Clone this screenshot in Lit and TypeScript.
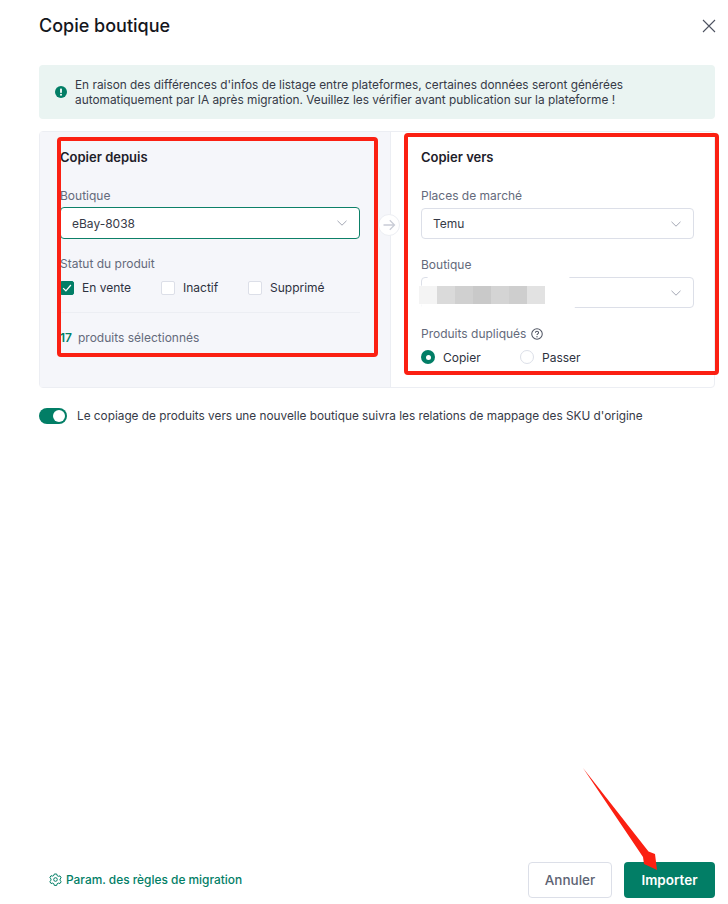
import { LitElement, html, css, svg } from "lit";
import { customElement } from "lit/decorators.js";

const chevron = html`<svg class="chev" width="12" height="12" viewBox="0 0 12 12" fill="none"><path d="M1.500 3.800 6 8.200l4.500-4.400" stroke="#a4a8b5" stroke-width="1"/></svg>`;

@customElement("app-root")
export class AppRoot extends LitElement {
  static styles = css`
    :host { display: block; position: relative; width: 728px; height: 904px; background: #fff; overflow: hidden;
      font-family: Inter, "Noto Sans", sans-serif; font-size: 12px; color: #2e3240; }
    * { box-sizing: border-box; }
    .modal { display: flex; flex-direction: column; height: 904px; padding: 0 13px 7px 39px; }
    .head { display: flex; justify-content: space-between; align-items: center; height: 51px; }
    h1 { margin: 0; font-size: 18px; font-weight: 500; color: #14161c; line-height: 24px; }
    .close { margin-right: -1px; display: block; }
    .alert { margin-top: 14px; height: 54px; border-radius: 4px; background: #eaf4f2; display: flex; align-items: center; gap: 8px; padding: 0 16px; line-height: 15px; font-size: 11.85px; color: #363a47; }
    .alert svg { flex: none; }
    .alert div { margin-top: 2px; }
    .panel { margin-top: 12px; height: 257px; border: 1px solid #eceef3; border-radius: 4px; display: flex; }
    .from { width: 351px; padding: 17px 30px 0 20px; background: #f5f6fa; border-right: 1px solid #eceef3; position: relative; }
    .to { flex: 1; padding: 17px 20px 0 30px; }
    h2 { margin: 0; font-size: 13px; font-weight: 600; line-height: 16px; color: #1d2029; }
    .label { color: #646a7b; line-height: 16px; padding-top: 1px; font-size: 12px; display: flex; align-items: center; gap: 5px; }
    .label.flat { padding-top: 0; }
    .mt22 { margin-top: 22px; }
    .select { margin-top: 4px; height: 31px; border: 1px solid #dcdfe8; border-radius: 4px; background: #fff; display: flex; align-items: center; justify-content: space-between; padding: 0 11px; color: #363a47; }
    .select.focus { margin-top: 3px; height: 32px; border-color: #0d8068; }
    .after { margin-top: 17px; }
    .arrow { position: absolute; right: -10px; top: 82px; width: 22px; height: 22px; border-radius: 50%; background: #fff; border: 1px solid #eceef3; display: flex; align-items: center; justify-content: center; }
    .checks { display: flex; margin-top: 8px; height: 16px; align-items: center; }
    .check { display: flex; align-items: center; gap: 8px; line-height: 16px; }
    .box { width: 14px; height: 14px; border: 1px solid #dcdfe8; border-radius: 2px; background: #fff; display: flex; align-items: center; justify-content: center; }
    .box.on { background: #027e66; border-color: #027e66; }
    .c1 { width: 101px; } .c2 { width: 87px; }
    .divider { height: 1px; background: #eceef3; margin-top: 16px; }
    .count { margin-top: 17px; line-height: 16px; color: #646a7b; display: flex; gap: 6px; font-size: 12px; }
    .count b { color: #027e66; font-weight: 600; }
    .radios { display: flex; margin-top: 7px; height: 16px; align-items: center; }
    .radio { display: flex; align-items: center; gap: 8px; }
    .r1 { width: 99px; }
    .dot { width: 14px; height: 14px; border-radius: 50%; border: 1px solid #dcdfe8; background: #fff; }
    .dot.on { background: #027e66; border: 0; display: flex; align-items: center; justify-content: center; }
    .dot.on::after { content: ""; width: 5px; height: 5px; border-radius: 50%; background: #fff; }
    .switch-row { margin-top: 20px; display: flex; align-items: center; gap: 10px; height: 16px; font-size: 11.800px; color: #363a47; }
    .switch { width: 28px; height: 16px; background: #027e66; border-radius: 8px; padding: 2px 2px 2px 14px; }
    .knob { width: 12px; height: 12px; border-radius: 50%; background: #fff; }
    .foot { margin-top: auto; height: 35px; display: flex; align-items: center; justify-content: space-between; padding-left: 10px; }
    .link { display: flex; align-items: center; gap: 4px; color: #027e66; font-size: 11.900px; font-weight: 500; }
    .btns { display: flex; gap: 12px; }
    button { height: 36px; border-radius: 4px; font: inherit; font-size: 13.500px; font-weight: 500; }
    .cancel { width: 84px; background: #fff; border: 1px solid #dcdfe8; color: #5d6373; }
    .ok { width: 91px; background: #027e66; border: 0; color: #fff; font-weight: 600; }
    .blur { position: absolute; left: 420px; top: 272px; width: 157px; height: 48px; background: #fff; border-radius: 22px; }
    .pixels { position: absolute; left: 419px; top: 286px; display: flex; }
    .pixels i { width: 18px; height: 18px; display: block; }
    .overlay { position: absolute; left: 0; top: 0; pointer-events: none; }
  `;

  render() {
    const pix = ["#f4f4f4", "#dadada", "#d0d0d0", "#c9c9c9", "#d4d4d4", "#cecece", "#e2e2e2"];
    return html`
      <div class="modal">
        <div class="head">
          <h1>Copie boutique</h1>
          <svg class="close" width="14" height="14" viewBox="0 0 14 14" fill="none"><path d="M1 1l12 12M13 1 1 13" stroke="#4e5361" stroke-width="1.100"/></svg>
        </div>
        <div class="alert">
          <svg width="12" height="12" viewBox="0 0 12 12"><circle cx="6" cy="6" r="6" fill="#027e66"/><rect x="5.100" y="2.400" width="1.800" height="4.600" rx=".7" fill="#fff"/><circle cx="6" cy="8.800" r="1" fill="#fff"/></svg>
          <div>En raison des différences d'infos de listage entre plateformes, certaines données seront générées<br>automatiquement par IA après migration. Veuillez les vérifier avant publication sur la plateforme !</div>
        </div>
        <div class="panel">
          <div class="from">
            <h2>Copier depuis</h2>
            <div class="label mt22">Boutique</div>
            <div class="select focus"><span>eBay-8038</span>${chevron}</div>
            <div class="label flat after">Statut du produit</div>
            <div class="checks">
              <div class="check c1"><span class="box on"><svg width="10" height="10" viewBox="0 0 9 9" fill="none"><path d="M1 4.600 3.500 7 8 1.800" stroke="#fff" stroke-width="1.100"/></svg></span>En vente</div>
              <div class="check c2"><span class="box"></span>Inactif</div>
              <div class="check"><span class="box"></span>Supprimé</div>
            </div>
            <div class="divider"></div>
            <div class="count"><b>17</b><span>produits sélectionnés</span></div>
            <div class="arrow"><svg width="14" height="14" viewBox="0 0 14 14" fill="none"><path d="M1.500 7h11M7.800 2.300 12.500 7l-4.700 4.700" stroke="#c9ccd6" stroke-width="1.300"/></svg></div>
          </div>
          <div class="to">
            <h2>Copier vers</h2>
            <div class="label mt22">Places de marché</div>
            <div class="select"><span>Temu</span>${chevron}</div>
            <div class="label after">Boutique</div>
            <div class="select"><span></span>${chevron}</div>
            <div class="label after">Produits dupliqués
              <svg width="12" height="12" viewBox="0 0 13 13" fill="none"><circle cx="6.500" cy="6.500" r="5.700" stroke="#4e5361" stroke-width="1.100"/><path d="M4.800 5.200c0-2.200 3.400-2.200 3.400-.1 0 1.200-1.700 1.300-1.700 2.500" stroke="#4e5361" stroke-width="1.100"/><circle cx="6.500" cy="9.500" r=".7" fill="#4e5361"/></svg>
            </div>
            <div class="radios">
              <div class="radio r1"><span class="dot on"></span>Copier</div>
              <div class="radio"><span class="dot"></span>Passer</div>
            </div>
          </div>
        </div>
        <div class="switch-row">
          <div class="switch"><div class="knob"></div></div>
          <span>Le copiage de produits vers une nouvelle boutique suivra les relations de mappage des SKU d'origine</span>
        </div>
        <div class="foot">
          <div class="link">
            <svg width="13" height="13" viewBox="0 0 13 13" fill="none" stroke="#027e66" stroke-width="1"><path d="M5.300 1h2.400l.4 1.600 1.300.7 1.600-.4 1.200 2-1.200 1.100v1.400l1.200 1.100-1.200 2-1.600-.4-1.300.7-.4 1.600H5.300l-.4-1.600-1.300-.7-1.600.4-1.200-2 1.200-1.100V5.800L.8 4.700l1.200-2 1.600.4 1.300-.7z" stroke-linejoin="round"/><circle cx="6.500" cy="6.500" r="1.800"/></svg>
            Param. des règles de migration
          </div>
          <div class="btns">
            <button class="cancel">Annuler</button>
            <button class="ok">Importer</button>
          </div>
        </div>
      </div>
      <div class="blur"></div>
      <div class="pixels">${pix.map((c) => html`<i style="background:${c}"></i>`)}</div>
      <svg class="overlay" width="728" height="904" viewBox="0 0 728 904" fill="none">
        ${svg`<rect x="59" y="139" width="317" height="216" rx="2" stroke="#fb2012" stroke-width="4"/>
        <rect x="406" y="135" width="311" height="238" rx="2" stroke="#fb2012" stroke-width="4"/>
        <path d="M583 768 L648.500 851.500 L655 854 L657 870 L644 864 L643 857 Z" fill="#fb2012"/>`}
      </svg>
    `;
  }
}
